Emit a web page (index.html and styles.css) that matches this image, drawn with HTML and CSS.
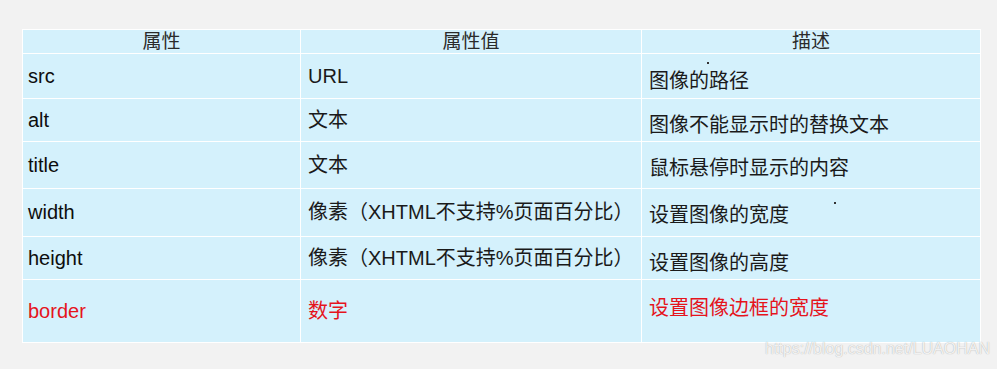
FILE: index.html
```html
<!DOCTYPE html>
<html lang="zh">
<head>
<meta charset="utf-8">
<link rel="stylesheet" href="styles.css">
</head>
<body>
<div class="page">
  <table class="attrs">
    <colgroup>
      <col class="c1"><col class="c2"><col class="c3">
    </colgroup>
    <thead>
      <tr class="head"><th>属性</th><th>属性值</th><th>描述</th></tr>
    </thead>
    <tbody>
      <tr class="r1"><td class="name">src</td><td class="val">URL</td><td class="desc">图像的路径</td></tr>
      <tr class="r2"><td class="name">alt</td><td class="val">文本</td><td class="desc">图像不能显示时的替换文本</td></tr>
      <tr class="r3"><td class="name">title</td><td class="val">文本</td><td class="desc">鼠标悬停时显示的内容</td></tr>
      <tr class="r4"><td class="name">width</td><td class="val">像素（XHTML不支持%页面百分比）</td><td class="desc">设置图像的宽度</td></tr>
      <tr class="r5"><td class="name">height</td><td class="val">像素（XHTML不支持%页面百分比）</td><td class="desc">设置图像的高度</td></tr>
      <tr class="r6 em"><td class="name">border</td><td class="val">数字</td><td class="desc">设置图像边框的宽度</td></tr>
    </tbody>
  </table>
  <span class="dot dot-a"></span>
  <span class="dot dot-b"></span>
  <span class="watermark">https://blog.csdn.net/LUAOHAN</span>
</div>
</body>
</html>
```
FILE: styles.css
```css
html, body {
  margin: 0;
  padding: 0;
  background: #f2f2f2;
}
.page {
  position: relative;
  width: 997px;
  height: 369px;
  padding: 29px 0 0 22px;
  box-sizing: border-box;
  font-family: "Liberation Sans", "Noto Sans CJK SC", sans-serif;
  font-size: 20px;
  color: #111;
}
.attrs {
  border-collapse: collapse;
  width: 958px;
  table-layout: fixed;
  background: #d4f1fc;
}
.c1 { width: 278px; }
.c2 { width: 341px; }
.c3 { width: 339px; }
.attrs th, .attrs td {
  border: 1px solid #ffffff;
  padding: 0;
  line-height: 23px;
  vertical-align: middle;
  white-space: nowrap;
}
.attrs th {
  font-weight: normal;
  text-align: center;
  color: #2a2a2a;
  font-size: 19px;
}
.head { height: 23px; }
.r1 { height: 45px; }
.r2 { height: 43px; }
.r3 { height: 47px; }
.r4 { height: 48px; }
.r5 { height: 43px; }
.r6 { height: 63px; }
.name { padding-left: 5px !important; color: #0d0d0d; }
.val { padding-left: 7px !important; color: #1a1a1a; }
.desc { padding: 10px 0 0 7px !important; color: #1a1a1a; }
.r3 .desc, .r4 .desc { padding-top: 6px !important; }
.em td { color: #e5141c; }
.em .desc { padding: 0 0 6px 7px !important; }
.dot {
  position: absolute;
  width: 2px;
  height: 2px;
  background: #333;
}
.dot-a { left: 707px; top: 62px; }
.dot-b { left: 834px; top: 202px; }
.watermark {
  position: absolute;
  left: 765px;
  top: 340px;
  font-family: "Liberation Sans", sans-serif;
  font-size: 16px;
  color: rgba(255, 255, 255, 0.85);
  text-shadow: 0 0 1px rgba(0, 0, 0, 0.35);
  white-space: nowrap;
}
```
